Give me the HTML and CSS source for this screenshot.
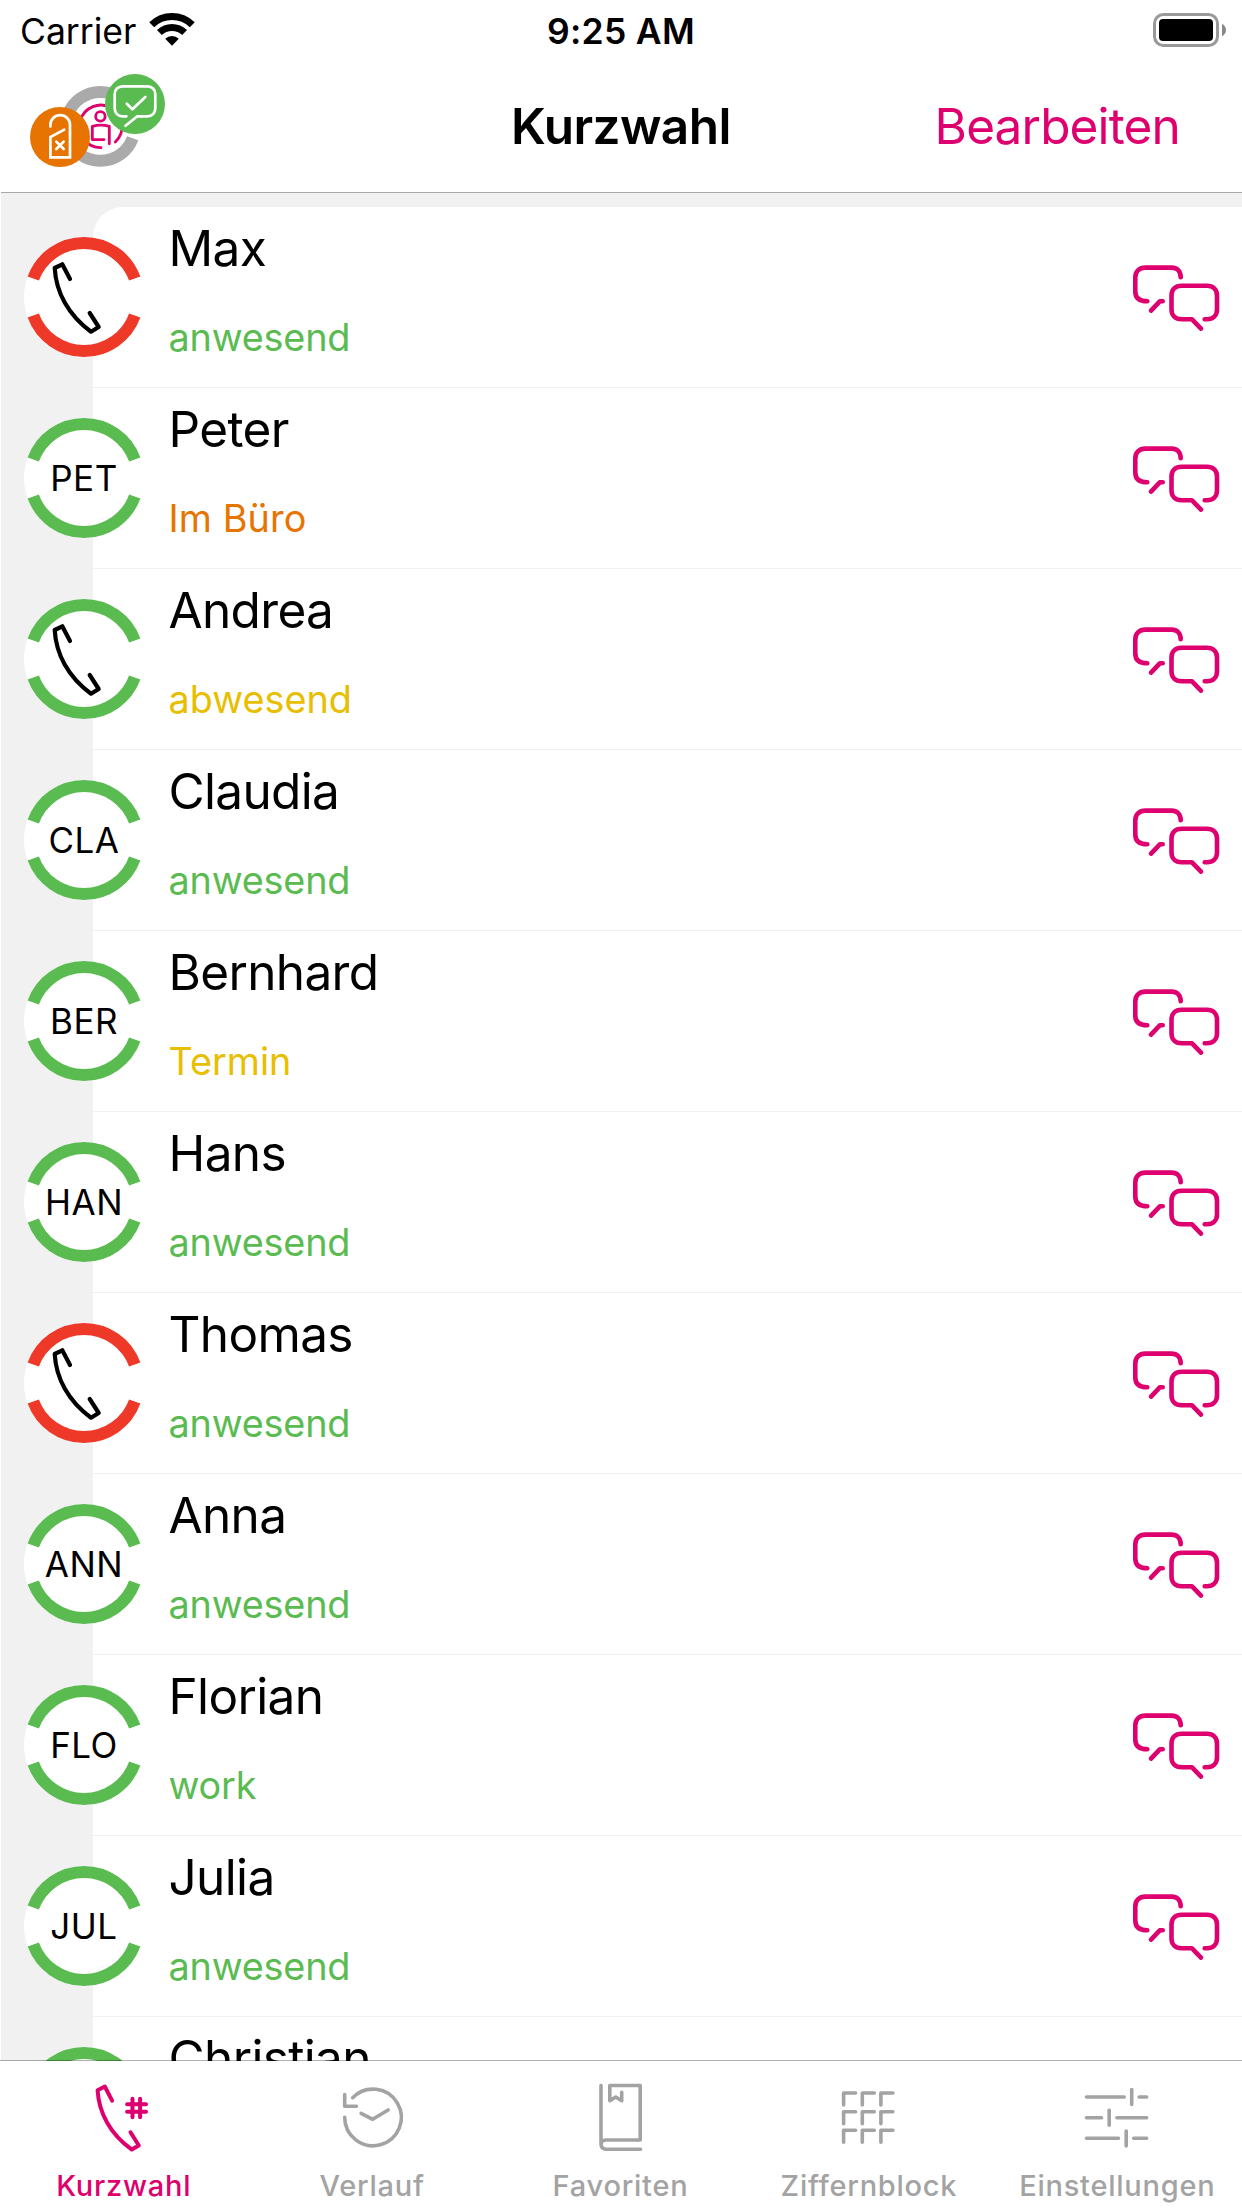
FILE: index.html
```html
<!DOCTYPE html>
<html lang="de">
<head>
<meta charset="utf-8">
<title>Kurzwahl</title>
<link rel="stylesheet" href="styles.css">
</head>
<body>
<svg class="defs" aria-hidden="true">
  <symbol id="ring" viewBox="0 0 120 120">
    <circle cx="60" cy="60" r="60" fill="#fff"/>
    <path d="M9.26 41.53A54 54 0 0 1 110.74 41.53M9.26 78.47A54 54 0 0 0 110.74 78.47" fill="none" stroke="currentColor" stroke-width="12"/>
  </symbol>
  <symbol id="handset" viewBox="0 0 120 120">
    <path d="M46 42L38.3 27.3L30.7 31C32 55 44 78 67 94.7L74.7 90L65.7 76" fill="none" stroke="#000" stroke-width="4.2" stroke-linecap="round" stroke-linejoin="round"/>
  </symbol>
  <symbol id="chat" viewBox="1130 262 92 70">
    <path d="M1180.7 277.3C1180.7 271 1177 267.6 1171.5 267.6H1145.500C1139 267.600 1135.300 271.500 1135.300 277.500V291.500C1135.300 297.500 1139 301.300 1147.300 301.300M1162.700 301.300H1159.800L1151 310.600M1204.700 319.300H1207C1213 319.300 1217 315.500 1217 309.500V295.500C1217 289.500 1213 285.700 1207 285.700H1181.500C1175.500 285.700 1171.500 289.500 1171.500 295.500V309.500C1171.500 315.500 1175.500 319.300 1181.500 319.300H1192L1201 328.600" fill="none" stroke="currentColor" stroke-width="4.600" stroke-linecap="round" stroke-linejoin="round"/>
  </symbol>
</svg>
<div class="screen">
  <header class="top">
    <div class="status-bar">
      <div class="carrier">
        <span>Carrier</span>
        <svg class="wifi" viewBox="148 12 48 35">
          <path d="M151.700 24.700A29.200 29.200 0 0 1 192.300 24.700M159.400 32.500A18.200 18.200 0 0 1 184.600 32.500" fill="none" stroke="#000" stroke-width="7"/>
          <path d="M165.200 38.800A9.700 9.700 0 0 1 178.800 38.800L172 45.700Z"/>
        </svg>
      </div>
      <div class="clock">9:25 AM</div>
      <svg class="battery" viewBox="0 0 74 34">
        <rect x="1.500" y="1.500" width="63" height="31" rx="9" fill="none" stroke="#999" stroke-width="3"/>
        <rect x="6" y="6" width="54" height="22" rx="4"/>
        <path d="M69 10.700Q73 13 73 17Q73 21 69 23.300Z" fill="#888"/>
      </svg>
    </div>
    <nav class="nav-bar">
      <svg class="presence" viewBox="28 72 140 98">
        <path d="M67.900 114.600A34.500 34.500 0 0 1 132.700 114.600M67.900 138.200A34.500 34.500 0 0 0 132.700 138.200" fill="none" stroke="#aaa" stroke-width="12"/>
        <g fill="none" stroke="#de006e" stroke-width="2.800" stroke-linecap="round" stroke-linejoin="round">
          <path d="M101 147.700A21.300 21.300 0 1 1 115.300 142"/>
          <circle cx="100.400" cy="116.400" r="4.700"/>
          <path d="M104 139.600H92.300V126.300Q100.800 124 109.300 126.300V143.800"/>
        </g>
        <circle cx="60" cy="137" r="30" fill="#e77400"/>
        <path d="M50.400 126.500V125A9.800 9.800 0 0 1 70 125V157.300H50.400V137L64.200 129.600M56.300 141.600L63.700 149M63.700 141.600L56.300 149" fill="none" stroke="#fff" stroke-width="2.700" stroke-linecap="round"/>
        <circle cx="135" cy="104" r="30" fill="#5abb51"/>
        <path d="M126.400 116.300H122.500C118 116.300 114.700 113 114.700 108.500V94C114.700 89.500 118 86.300 122.500 86.300H147.500C152 86.300 155.300 89.500 155.300 94V108.500C155.300 113 152 116.300 147.500 116.300H137.300L125.500 125.800M126.800 103.800L132.400 109.300L145.300 97" fill="none" stroke="#fff" stroke-width="2.700" stroke-linecap="round" stroke-linejoin="round"/>
      </svg>
      <h1 class="title">Kurzwahl</h1>
      <a class="edit">Bearbeiten</a>
    </nav>
  </header>

  <main class="content">
    <ul class="contacts">
      <li class="contact"><div class="avatar busy"><svg><use href="#ring"/></svg><svg><use href="#handset"/></svg></div><div class="info"><div class="name">Max</div><div class="state present">anwesend</div></div><svg class="chat"><use href="#chat"/></svg></li>
      <li class="contact"><div class="avatar"><svg><use href="#ring"/></svg><span>PET</span></div><div class="info"><div class="name">Peter</div><div class="state office">Im Büro</div></div><svg class="chat"><use href="#chat"/></svg></li>
      <li class="contact"><div class="avatar"><svg><use href="#ring"/></svg><svg><use href="#handset"/></svg></div><div class="info"><div class="name">Andrea</div><div class="state away">abwesend</div></div><svg class="chat"><use href="#chat"/></svg></li>
      <li class="contact"><div class="avatar"><svg><use href="#ring"/></svg><span>CLA</span></div><div class="info"><div class="name">Claudia</div><div class="state present">anwesend</div></div><svg class="chat"><use href="#chat"/></svg></li>
      <li class="contact"><div class="avatar"><svg><use href="#ring"/></svg><span>BER</span></div><div class="info"><div class="name">Bernhard</div><div class="state away">Termin</div></div><svg class="chat"><use href="#chat"/></svg></li>
      <li class="contact"><div class="avatar"><svg><use href="#ring"/></svg><span>HAN</span></div><div class="info"><div class="name">Hans</div><div class="state present">anwesend</div></div><svg class="chat"><use href="#chat"/></svg></li>
      <li class="contact"><div class="avatar busy"><svg><use href="#ring"/></svg><svg><use href="#handset"/></svg></div><div class="info"><div class="name">Thomas</div><div class="state present">anwesend</div></div><svg class="chat"><use href="#chat"/></svg></li>
      <li class="contact"><div class="avatar"><svg><use href="#ring"/></svg><span>ANN</span></div><div class="info"><div class="name">Anna</div><div class="state present">anwesend</div></div><svg class="chat"><use href="#chat"/></svg></li>
      <li class="contact"><div class="avatar"><svg><use href="#ring"/></svg><span>FLO</span></div><div class="info"><div class="name">Florian</div><div class="state present">work</div></div><svg class="chat"><use href="#chat"/></svg></li>
      <li class="contact"><div class="avatar"><svg><use href="#ring"/></svg><span>JUL</span></div><div class="info"><div class="name">Julia</div><div class="state present">anwesend</div></div><svg class="chat"><use href="#chat"/></svg></li>
      <li class="contact"><div class="avatar"><svg><use href="#ring"/></svg></div><div class="info"><div class="name">Christian</div></div></li>
    </ul>
  </main>

  <nav class="tab-bar">
    <a class="tab active">
      <svg viewBox="84.200 2082 80 72"><path d="M112.300 2100.700L105 2086.500L97.800 2090.300C99 2112 110 2134 132 2149.500L139 2145.500L130.700 2132.300M132.700 2098.700V2117.300M140.300 2098.700V2117.300M127.300 2104.200H146.200M127.300 2111.800H146.200"/></svg>
      <span>Kurzwahl</span>
    </a>
    <a class="tab">
      <svg viewBox="332.600 2082 80 72"><path d="M344.300 2117.300A28.300 28.300 0 1 0 352.300 2097.700M344.300 2094.500V2106.300H356M360.700 2113.300L372.300 2119.300L387.700 2110"/></svg>
      <span>Verlauf</span>
    </a>
    <a class="tab">
      <svg viewBox="581 2082 80 72"><path d="M601 2085.500V2143.500Q601 2149.300 606.500 2149.300H640.500M601 2145Q601 2140 606 2140H640.200V2085.500H609.800V2100.700L615.700 2097L621.700 2100.700V2092.300"/></svg>
      <span>Favoriten</span>
    </a>
    <a class="tab">
      <svg viewBox="829.400 2082 80 72"><path d="M844 2105V2093H856M862.700 2105V2093H874.700M881.300 2105V2093H893.300M844 2123.700V2111.700H856M862.700 2123.700V2111.700H874.700M881.300 2123.700V2111.700H893.300M844 2142.300V2130.300H856M862.700 2142.300V2130.300H874.700M881.300 2142.300V2130.300H893.300"/></svg>
      <span>Ziffernblock</span>
    </a>
    <a class="tab">
      <svg viewBox="1077.800 2082 80 72"><path d="M1086.300 2097H1124M1131.500 2089.500V2104.500M1139 2097H1146.500M1086.300 2117.700H1101.300M1109 2110.300V2125.300M1116.700 2117.700H1146.500M1086.300 2138.300H1118.300M1126 2131V2146M1133.500 2138.300H1146.500"/></svg>
      <span>Einstellungen</span>
    </a>
  </nav>
</div>
</body>
</html>
```
FILE: styles.css
```css
* {
  box-sizing: border-box;
}

body {
  margin: 0;
  background: #fff;
  color: #000;
  font-family: Inter, "Liberation Sans", sans-serif;
}

.defs {
  display: none;
}

.screen {
  width: 1242px;
  height: 2208px;
  display: flex;
  flex-direction: column;
  overflow: hidden;
}

.top {
  height: 192px;
  flex: none;
}

.status-bar {
  height: 60px;
  display: grid;
  grid-template-columns: 1fr auto 1fr;
  align-items: center;
  padding: 2px 15px 0 20px;
}

.carrier {
  display: flex;
  align-items: center;
  gap: 12px;
  font-size: 35.500px;
}

.wifi {
  width: 48px;
  height: 35px;
  margin-top: -3px;
}

.clock {
  padding-right: 5px;
  font-size: 35.500px;
  font-weight: 600;
  letter-spacing: 0.300px;
}

.battery {
  width: 74px;
  height: 34px;
  justify-self: end;
  margin-top: -2px;
}

.nav-bar {
  height: 132px;
  display: grid;
  grid-template-columns: 1fr auto 1fr;
  align-items: center;
  padding: 0 62px 0 28px;
}

.presence {
  width: 140px;
  height: 98px;
  margin-top: -10px;
}

.title {
  margin: 0;
  padding-left: 34px;
  font-size: 49.500px;
  line-height: 60px;
  font-weight: 600;
  letter-spacing: -0.550px;
}

.edit {
  justify-self: end;
  color: #de006e;
  font-size: 49.500px;
  line-height: 60px;
  letter-spacing: -0.850px;
}

.content {
  flex: 1;
  min-height: 0;
  margin-left: 1px;
  padding: 14px 0 0 92px;
  border-top: 1px solid #a8a8a8;
  background: #f1f1f1;
}

.contacts {
  height: 1854px;
  margin: 0 0 0 -92px;
  padding: 0 0 0 92px;
  list-style: none;
  overflow: hidden;
}

.contact {
  height: 181px;
  display: flex;
  align-items: flex-start;
  background: #fff;
  border-bottom: 1px solid #f0f0f0;
}

.contact:first-child {
  border-top-left-radius: 30px;
}

.avatar {
  width: 120px;
  height: 120px;
  margin: 30px 0 0 -69px;
  display: grid;
  place-items: center;
  flex: none;
  color: #5abb51;
}

.avatar > * {
  grid-area: 1 / 1;
}

.avatar svg {
  width: 120px;
  height: 120px;
}

.avatar span {
  z-index: 1;
  color: #000;
  font-size: 35px;
  line-height: 44px;
  letter-spacing: 0.500px;
}

.busy {
  color: #ee3828;
}

.info {
  flex: 1;
  padding: 11px 0 0 24.500px;
}

.name {
  font-size: 49.500px;
  line-height: 60px;
  letter-spacing: -0.650px;
}

.state {
  margin-top: 34px;
  font-size: 37.800px;
  line-height: 50px;
  letter-spacing: -0.200px;
}

.present {
  color: #5abb51;
}

.office {
  color: #e77400;
  letter-spacing: 0.100px;
}

.away {
  color: #e8be00;
  letter-spacing: 0;
}

.chat {
  width: 92px;
  height: 70px;
  margin: 55px 20px 0 0;
  color: #de006e;
}

.tab-bar {
  height: 148px;
  margin-top: -1px;
  flex: none;
  display: flex;
  z-index: 1;
  border-top: 1px solid rgba(0, 0, 0, 0.300);
  background: #fff;
  background-clip: padding-box;
}

.tab {
  flex: 1;
  display: flex;
  flex-direction: column;
  align-items: center;
  padding-top: 21px;
  color: #a3a3a3;
  font-size: 29px;
  font-weight: 500;
  line-height: 36px;
  letter-spacing: 0.750px;
}

.tab span {
  padding-right: 1px;
}

.tab svg {
  width: 80px;
  height: 72px;
  margin-bottom: 14px;
  fill: none;
  stroke: currentColor;
  stroke-width: 3.600px;
  stroke-linecap: round;
  stroke-linejoin: round;
}

.tab.active {
  color: #de006e;
}

.tab.active svg {
  stroke-width: 4px;
}
```
